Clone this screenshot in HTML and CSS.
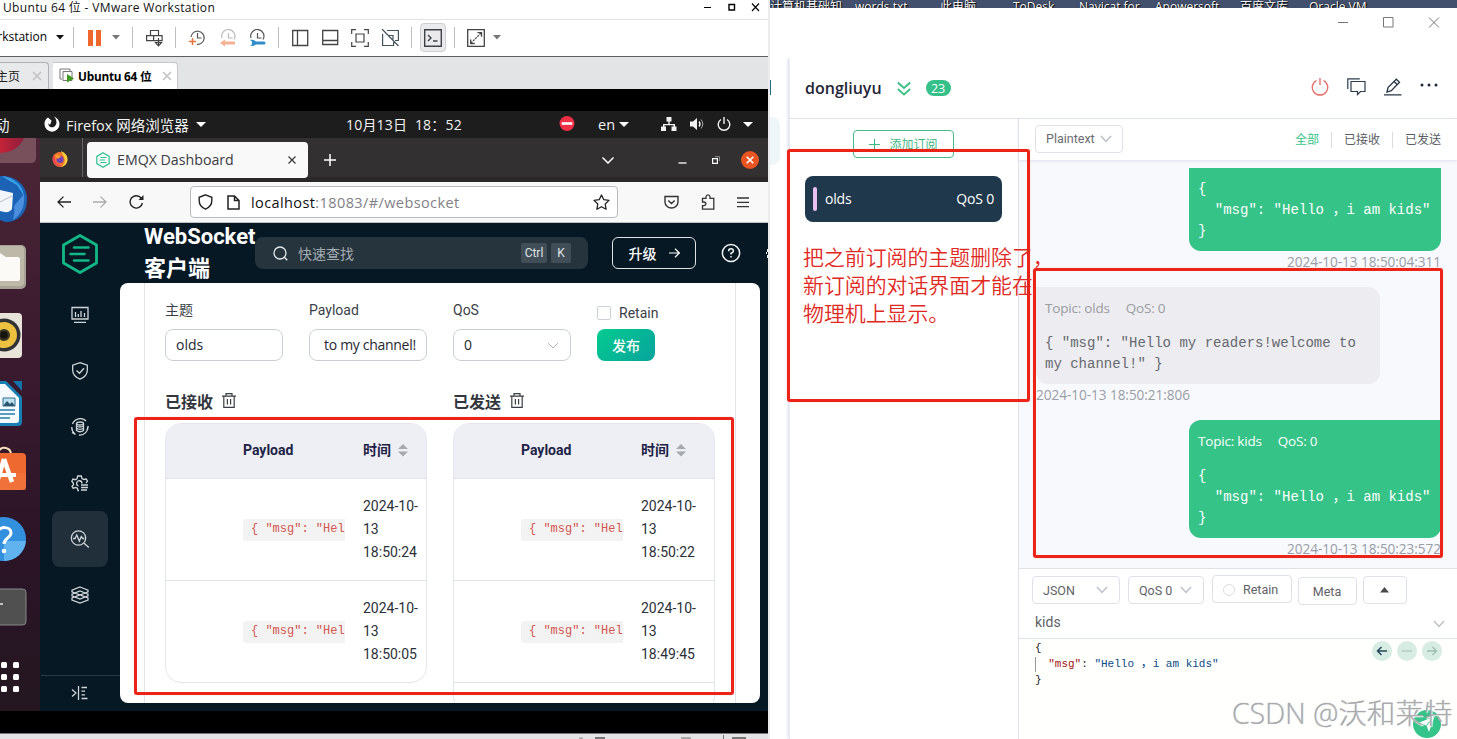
FILE: index.html
```html
<!DOCTYPE html>
<html lang="zh-CN">
<head>
<meta charset="utf-8">
<title>Ubuntu 64 位 - VMware Workstation</title>
<link rel="stylesheet" href="styles.css">
</head>
<body>
<div class="screen">
  <section class="vm">
    <header class="vm-title">
      <span class="vm-name">Ubuntu 64 位 - VMware Workstation</span>
      <svg class="vm-winbtns" width="56" height="13" viewBox="0 0 56 13" fill="none" stroke="#000"><path d="M0 6.500h7"/><path d="M25 3.500h5.500v5.500h-5.500z" stroke-width="1.400"/><path d="M48 2.500l7 7.500M55 2.500l-7 7.500" stroke-width="1.100"/></svg>
    </header>
    <div class="vm-toolbar">
      <span class="menu-text">rkstation</span>
      <svg width="8" height="5"><path d="M0 0h8l-4 4.500z" fill="#111"/></svg>
      <i class="sep"></i>
      <svg width="14" height="16" fill="#f0672c"><path d="M0 0h5v16h-5zM8 0h5v16h-5z"/></svg>
      <svg width="8" height="5"><path d="M0 0h8l-4 4.500z" fill="#777"/></svg>
      <i class="sep"></i>
      <svg width="18" height="18" fill="none" stroke="#444" stroke-width="1.200"><path d="M4.500 1.500h8v5h-8zM.6 6.600h7v5h-7zM7.600 6.600h8.500v5h-8.500M12.500 9v7M9.500 13.500l3 3.300 3-3.300z"/></svg>
      <i class="sep"></i>
      <svg width="17" height="18" fill="none" stroke="#555" stroke-width="1.200"><path d="M2 8a6.600 6.600 0 1 1 6 7.400M8.500 4v5h4"/><path d="M0 12.500h7M3.500 9v7" stroke="#e8743b" stroke-width="1.500"/></svg>
      <svg width="17" height="18" fill="none" stroke="#bbb" stroke-width="1.200"><path d="M2 9a6.600 6.600 0 1 1 12 1.500M8.500 4v5h4"/><path d="M5 10.500v2h10v3H5v2L0 14z" fill="#f4b193" stroke="none"/></svg>
      <svg width="17" height="18" fill="none" stroke="#555" stroke-width="1.200"><path d="M2 9a6.600 6.600 0 1 1 12 1.500M8.500 4v5h4"/><path d="M1 11c4-1 5 1 6 1.500h8a1.500 1.500 0 0 1 0 3H7c-1 .8-3 2-6 1l2-1v-3z" fill="#2f8ec9" stroke="none"/></svg>
      <i class="sep"></i>
      <svg width="17" height="18" fill="none" stroke="#444" stroke-width="1.300"><path d="M.7 1.500h15v15h-15zM5.500 1.500v15"/></svg>
      <svg width="17" height="18" fill="none" stroke="#444" stroke-width="1.300"><path d="M.7 1.500h15v14h-15zM.7 11.500h15"/></svg>
      <svg width="19" height="18" fill="none" stroke="#444" stroke-width="1.200"><path d="M.7 5V.7H5M13 .7h4.300V5M17.300 13v4.300H13M5 17.300H.7V13M5 5h8v8H5z"/></svg>
      <svg width="19" height="18" fill="none" stroke="#44535c" stroke-width="1.200"><path d="M6 1.500h11.400v10H14M1.600 5v11.500h11V13M8 6.500h4v4M1 0l16.500 17"/></svg>
      <i class="sep"></i>
      <span class="tool-active"><svg width="18" height="18" fill="none" stroke="#3c4248" stroke-width="1.400"><path d="M.7.7h16.600v16.600H.7zM4 6l3 3-3 3M9 12h4.500"/></svg></span>
      <i class="sep"></i>
      <svg width="18" height="18" fill="none" stroke="#444" stroke-width="1.300"><path d="M.7.7h16.600v16.600H.7z"/><path d="M4 14l10-10" stroke-dasharray="2 1"/><path d="M10.500 3.700h4v4M3.700 10.500v4h4"/></svg>
      <svg width="8" height="5"><path d="M0 0h8l-4 4.500z" fill="#777"/></svg>
    </div>
    <div class="vm-tabs">
      <div class="vm-tab home"><span>主页</span><svg width="10" height="10"><path d="M1 1l8 8M9 1l-8 8" stroke="#c2c2c4" stroke-width="1.600"/></svg></div>
      <div class="vm-tab current"><svg width="16" height="16" fill="none" stroke="#777"><path d="M3 11H1V1h10v2"/><path d="M4 3.500h9v9H4z" fill="#fff"/><path d="M8 6l7 4.500-7 4z" fill="#3f9a1f" stroke="none"/></svg><b>Ubuntu 64 位</b><svg width="10" height="10"><path d="M1 1l8 8M9 1l-8 8" stroke="#c2c2c4" stroke-width="1.600"/></svg></div>
    </div>
    <div class="blackband"></div>
    <div class="gnome">
      <span class="act">动</span>
      <svg width="16" height="16"><path d="M4 1.500C1.500 3 .3 5.500.5 8.300A7.500 7.500 0 0 0 15.500 8C15.500 4.500 13 1.500 9.500.5c1.700 1 2.500 2.500 2.700 4.200.9 2-.3 6.600-4.200 6.600-2.600 0-4-2.200-3.600-4L6 9l1.600-4.300z" fill="#fff"/></svg>
      <span>Firefox 网络浏览器</span>
      <svg width="10" height="5"><path d="M0 0h10l-5 5z" fill="#fff"/></svg>
      <span class="clock">10月13日&nbsp; 18：52</span>
      <svg width="16" height="16"><circle cx="8" cy="7.500" r="7.500" fill="#ee2f45"/><path d="M2.700 6.200h10.600v2.600H2.700z" fill="#fff"/></svg>
      <span>en</span>
      <svg width="10" height="5"><path d="M0 0h10l-5 5z" fill="#fff"/></svg>
      <svg width="16" height="14" fill="#f2f2f2"><path d="M5.500 0h5v4.500H8.700V7H14v2.500h1.500V14h-5V9.500h2V8.300h-9v1.200H5V14H0V9.500h2V7h5.300V4.500H5.500z"/></svg>
      <svg width="16" height="14" fill="none" stroke="#f2f2f2"><path d="M0 4.500h3L7 1v12L3 9.500H0z" fill="#f2f2f2" stroke="none"/><path d="M9 4.500q2 2.500 0 5" stroke-width="1.400"/><path d="M11 2.500q3.600 4.500 0 9" stroke="#aaa"/></svg>
      <svg width="14" height="14" fill="none" stroke="#f2f2f2" stroke-width="1.400"><path d="M4 2.500a5.800 5.800 0 1 0 6 0M7 0v7"/></svg>
      <svg width="10" height="5"><path d="M0 0h10l-5 5z" fill="#fff"/></svg>
    </div>
    <div class="guest">
      <nav class="dock">
        <svg width="40" height="27"><defs><linearGradient id="ff" x1="0" x2="1"><stop offset="0" stop-color="#c62438"/><stop offset="1" stop-color="#8c1d3d"/></linearGradient></defs><path d="M0 0h36v20q0 5-5 5H0z" fill="#77505b"/><path d="M0 0h24Q18 14 0 15z" fill="url(#ff)"/></svg>
        <svg width="40" height="68"><path d="M0 11C14 10 27 19 27 34S18 57 5 57L0 55z" fill="#1c62b5"/><path d="M2 11c12 1 21 10 22 20l-7-11-9-5z" fill="#39a1ea"/><path d="M24 29q2 17-11 26 2-9 1-14z" fill="#4b8ede"/><path d="M0 25l13 3-1 16q-3 5-12 2z" fill="#f3f5f9"/><path d="M0 37l12-6" stroke="#b7bfce" fill="none"/></svg>
        <svg width="40" height="68"><rect x="-20" y="12" width="46" height="44" rx="5" fill="#a7a196"/><rect x="-20" y="13" width="44" height="40" rx="4" fill="#beb8a9"/><path d="M0 20l6 4h12q2 0 2 2v20q0 2-2 2H0z" fill="#fbfaf7"/></svg>
        <svg width="40" height="68"><rect x="-20" y="12" width="42" height="45" rx="4" fill="#e9e4da"/><circle cx="4" cy="34" r="16.500" fill="#303235"/><circle cx="4" cy="34" r="13" fill="#edc13f"/><circle cx="4" cy="34" r="6" fill="#3c3728"/><circle cx="4" cy="34" r="3.800" fill="#17140e"/></svg>
        <svg width="40" height="68"><path d="M0 12h6l16 16v25q0 4-4 4H0z" fill="#1680b5"/><path d="M0 15h5l14 14v22q0 3-3 3H0z" fill="#f4fafd"/><path d="M13 12h9v10z" fill="#1273aa"/><path d="M3 29h12v8H3z" fill="#bfe2f3" stroke="#33718f"/><path d="M3 37l4-5 3 3 2-2 3 4z" fill="#2b556d"/><path d="M0 41h15M0 45h15M0 49h10" stroke="#227ea8" stroke-width="1.600"/></svg>
        <svg width="40" height="68"><path d="M-3 20q2-11 9-9 5 1 5 7" fill="none" stroke="#f6e1ba" stroke-width="2"/><rect x="-20" y="16" width="46" height="37" rx="4" fill="#ee6930"/><path d="M0 36h26v17H0z" fill="#f27c47" opacity=".45"/><path d="M-1 38h17" fill="none" stroke="#fff" stroke-width="4"/><path d="M4 22l8 23M4 22l-6 20" stroke="#fff" stroke-width="4.500"/></svg>
        <svg width="40" height="68"><circle cx="4" cy="34" r="22" fill="#3390df"/><path d="M4 36h22A22 22 0 0 1 4 56z" fill="#60b3ef"/><path d="M-2 27c1-6 13-6 13 1 0 5-7 5-7 11" fill="none" stroke="#fff" stroke-width="3"/><circle cx="4" cy="46" r="2.300" fill="#fff"/></svg>
        <svg width="40" height="68"><rect x="-20" y="16" width="46" height="36" rx="3.500" fill="#505050" stroke="#888"/><path d="M0 31h3" stroke="#fff" stroke-width="1.300"/></svg>
        <svg width="40" height="68" fill="#fff"><g id="dots"><rect x="1" y="21" width="6" height="6" rx="1.500"/><rect x="13" y="21" width="6" height="6" rx="1.500"/></g><use href="#dots" y="12"/><use href="#dots" y="24"/></svg>
      </nav>
      <div class="browser">
        <div class="tabstrip">
          <span class="pin"><svg width="18" height="18"><circle cx="9" cy="9.500" r="7.500" fill="#f1732c"/><path d="M10 1q7 3 6.500 9.500Q15 17 9 17q7-3 4-10z" fill="#fcd13a"/><path d="M3 4q-3 6 1 10 4 3.600 8 2-7-1-8-6z" fill="#ee3f59"/><circle cx="9" cy="9.500" r="3.500" fill="#7142b5"/><path d="M4 5q4-1 6 2l-4 2z" fill="#f79a2a"/></svg></span>
          <div class="btab"><svg width="14" height="16" fill="none" stroke="#2fc090" stroke-width="1.200"><path d="M7 .8l6.200 3.600v7.200L7 15.200.8 11.600V4.400zM4.500 5.500h6M3.500 8h5.500M4.500 10.500h6"/></svg><span>EMQX Dashboard</span><svg width="8" height="8"><path d="M.5.5l7 7M7.500.5l-7 7" stroke="#333" stroke-width="1.100"/></svg></div>
          <svg class="plus" width="12" height="12"><path d="M6 0v12M0 6h12" stroke="#fff" stroke-width="1.500"/></svg>
          <div class="bwin">
            <svg width="12" height="7" fill="none" stroke="#fff" stroke-width="1.500"><path d="M.5.5L6 6l5.500-5.500"/></svg>
            <svg width="9" height="9"><path d="M.5 7h8" stroke="#fff" stroke-width="1.300"/></svg>
            <svg width="8" height="8" fill="none" stroke="#fff" stroke-width="1.200"><path d="M.6 2.600h4.800v4.800H.6z"/><path d="M3 .6h4.400V5" stroke="#aaa" stroke-width=".8"/></svg>
            <svg width="18" height="18"><circle cx="9" cy="9" r="9" fill="#e95420"/><path d="M5.700 5.700l6.600 6.600M12.300 5.700l-6.600 6.600" stroke="#fff" stroke-width="1.600"/></svg>
          </div>
        </div>
        <div class="navbar">
          <svg width="14" height="12" fill="none" stroke="#222" stroke-width="1.300"><path d="M14 6H1M6.500.6L1 6l5.500 5.400"/></svg>
          <svg width="14" height="12" fill="none" stroke="#aaa" stroke-width="1.300"><path d="M0 6h13M7.500.6L13 6l-5.500 5.400"/></svg>
          <svg width="15" height="14" fill="none" stroke="#222" stroke-width="1.400"><path d="M12.500 3.500A6.200 6.200 0 1 0 13.400 8"/><path d="M14.500 0v5h-5z" fill="#222" stroke="none"/></svg>
          <div class="urlbar">
            <svg width="15" height="16" fill="none" stroke="#222" stroke-width="1.400"><path d="M7.500.8l6.300 2.500v3.500c0 4-3 7-6.300 8.400C4.200 13.800 1.200 10.800 1.200 6.800V3.300z"/></svg>
            <svg width="13" height="15" fill="none" stroke="#222" stroke-width="1.500"><path d="M1 1h6.500L12 5.500V14H1zM7.500 1v4.500H12"/></svg>
            <span class="url"><b>localhost</b>:18083/#/websocket</span>
            <svg width="17" height="16" fill="none" stroke="#222" stroke-width="1.300" stroke-linejoin="round"><path d="M8.500 1l2.300 4.700 5.200.7-3.800 3.600.9 5.200-4.600-2.500-4.600 2.500.9-5.200L1 6.400l5.200-.7z"/></svg>
          </div>
          <svg width="15" height="14" fill="none" stroke="#333" stroke-width="1.400"><path d="M1 1.500h13v5.500a6.500 6 0 0 1-13 0zM4.300 5.500l3.200 3 3.200-3"/></svg>
          <svg width="14" height="16" fill="none" stroke="#333" stroke-width="1.300"><path d="M1.500 15.200h11.300V4.300H9V2.800q-.2-2-2-2t-2 2v1.500H1.500V8H3q2 .3 2 1.800t-2 1.800H1.500z"/></svg>
          <svg width="12" height="11"><path d="M0 1h12M0 5.300h12M0 9.600h12" stroke="#333" stroke-width="1.300"/></svg>
        </div>
        <div class="emqx">
          <aside class="side">
            <svg class="logo" width="38" height="42" fill="none" stroke="#12b886" stroke-width="2.800" stroke-linejoin="round" stroke-linecap="round"><path d="M19 2.500l16.500 9.500v18L19 39.500 2.500 30V12z"/><path d="M13 14.500h14.500M9.500 21h14M13 27.500h14.500" stroke-width="2.500"/></svg>
            <div class="side-nav">
              <span><svg width="18" height="18"><path d="M1 1.500h16v11.500H1zM3 16.300h12M4.500 6v5M7.300 8v3M10 5v6M13.500 7v4"/></svg></span>
              <span><svg width="18" height="18"><path d="M9 .7l7.300 2.500v5q0 6-7.300 9Q1.700 14 1.700 8.200v-5zM5.500 8.500l3 2.800 4.500-5"/></svg></span>
              <span><svg width="18" height="18"><path d="M1.500 6A8.200 8.200 0 0 1 15 3M17 8a8.200 8.200 0 0 1-9 9M4 16A8.200 8.200 0 0 1 .8 9M16 12l1.200-4M4.500 16.500L1 14.500"/><ellipse cx="9" cy="5.500" rx="3.500" ry="1.500"/><path d="M5.500 5.500v7q3.500 2.500 7 0v-7M5.500 8q3.500 2 7 0M5.500 10.300q3.500 2 7 0"/></svg></span>
              <span><svg width="18" height="18"><path d="M8 16.500H7l-.6-2.200-2-.9-2.200 1-1.200-2 1.500-1.700L2.300 9 .8 7.300l1.100-2.200 2.300.6 1.800-1L6.700 2h3.600L11 4.500l1.800 1 2.400-.5 1.300 2L15 9M11 9.500A2.700 2.700 0 1 0 7.500 12M10 11h7M10 13.500h7M10 16h6"/></svg></span>
              <span class="on"><svg width="20" height="18"><circle cx="8.500" cy="8" r="7.200"/><path d="M13.800 13l5 4.500M3 8.500h2L6.800 5l2.500 6 2-4.500 1.500 2h1.500"/></svg></span>
              <span><svg width="18" height="18"><path d="M9 1l8 3.200v1.600L9 9 1 5.800V4.200zM1 8.200V9.800L9 13l8-3.200V8.200L9 5zM1 12v2l8 3 8-3v-2L9 9z"/></svg></span>
            </div>
            <div class="fold"><svg width="18" height="16"><path d="M1 4.500L5 8l-4 3.500M7.500 1v14M10.500 2.500H16M10.500 6.200H14M10.500 9.900H14M10.500 13.500H16.500"/></svg></div>
          </aside>
          <div class="emqx-main">
            <div class="emqx-head">
              <h1>WebSocket<br>客户端</h1>
              <div class="search"><svg width="15" height="15" fill="none" stroke="#e4e8ea" stroke-width="1.300"><circle cx="7" cy="7" r="6"/><path d="M11.300 11.300l3 3"/></svg><span>快速查找</span><kbd>Ctrl</kbd><kbd class="k">K</kbd></div>
              <div class="upgrade"><b>升级</b><svg width="11" height="10" fill="none" stroke="#fff" stroke-width="1.200"><path d="M0 5h10M6 .8L10.300 5 6 9.200"/></svg></div>
              <svg class="help" width="20" height="20" fill="none" stroke="#f2f4f5" stroke-width="1.500"><circle cx="10" cy="10" r="8.600"/><path d="M7.600 8.200q0-2.500 2.400-2.500t2.400 2.200Q12.400 9.200 10 10.300v1.200M10 13v1.500"/></svg>
              <svg class="cut" width="2" height="9" fill="#e9edef"><path d="M1 0h1v3H1zM0 3h1v2H0zM1 6h1v3H1z"/></svg>
            </div>
            <main class="card">
              <div class="sheet">
                <div class="form">
                  <label><span>主题</span><span class="input">olds</span></label>
                  <label><span>Payload</span><span class="input pay">to my channel!</span></label>
                  <label><span>QoS</span><span class="input">0<svg width="12" height="7" fill="none" stroke="#aeb2b8"><path d="M1 1l5 5 5-5"/></svg></span></label>
                  <div class="pub"><span class="retain"><i></i>Retain</span><span class="btn">发布</span></div>
                </div>
                <div class="lists">
                  <section>
                    <h2>已接收<svg width="14" height="15" fill="none" stroke="#3a3f46" stroke-width="1.200"><path d="M0 3.200h14M4 3V.7h6V3M1.800 3.500v10.800h10.400V3.500M5.400 6v5.500M8.600 6v5.500"/></svg></h2>
                    <div class="table">
                      <div class="tr th"><span>Payload</span><span>时间<svg width="10" height="13" fill="#a5a8ae"><path d="M0 5h10L5 0zM0 7.500h10l-5 5z"/></svg></span></div>
                      <div class="tr"><code>{ "msg": "Hell</code><time>2024-10-13 18:50:24</time></div>
                      <div class="tr"><code>{ "msg": "Hell</code><time>2024-10-13 18:50:05</time></div>
                    </div>
                  </section>
                  <section>
                    <h2>已发送<svg width="14" height="15" fill="none" stroke="#3a3f46" stroke-width="1.200"><path d="M0 3.200h14M4 3V.7h6V3M1.800 3.500v10.800h10.400V3.500M5.400 6v5.500M8.600 6v5.500"/></svg></h2>
                    <div class="table open">
                      <div class="tr th"><span>Payload</span><span>时间<svg width="10" height="13" fill="#a5a8ae"><path d="M0 5h10L5 0zM0 7.500h10l-5 5z"/></svg></span></div>
                      <div class="tr"><code>{ "msg": "Hell</code><time>2024-10-13 18:50:22</time></div>
                      <div class="tr"><code>{ "msg": "Hell</code><time>2024-10-13 18:49:45</time></div>
                      <div class="tr"></div>
                    </div>
                  </section>
                </div>
              </div>
            </main>
          </div>
        </div>
      </div>
    </div>
    <div class="blackband"></div>
    <div class="vm-status"><svg width="200" height="4"><g fill="#777"><circle cx="20" cy="4" r="2" fill="#aaa"/><path d="M34 2h10v2H34z"/><path d="M120 2h10v2h-10z" fill="#aaa"/><path d="M162 0h1v4h-1zM171 2h14v2h-14z"/></g></svg></div>
  </section>

  <section class="host">
    <div class="host-desk"><span>计算机基础知</span><span>words.txt</span><span>此电脑</span><span>ToDesk</span><span>Navicat for</span><span>Apowersoft</span><span>百度文库</span><span>Oracle VM</span></div>
    <div class="mqttx">
      <div class="caption"><svg width="102" height="11" fill="none" stroke="#777"><path d="M0 5.500h10M45.500.5h9.500v9.500h-9.500zM91 .5l10 10M101 .5l-10 10"/></svg></div>
      <div class="mx-row">
        <div class="gutter"><i class="mark"></i><i class="chip"></i></div>
        <div class="mx">
          <header class="mx-head">
            <b>dongliuyu</b>
            <svg width="14" height="15" fill="none" stroke="#3bbf84" stroke-width="1.800"><path d="M.8 1.500L7 7l6.200-5.500M.8 8L7 13.500 13.200 8"/></svg>
            <span class="badge">23</span>
            <div class="mx-tools">
              <svg width="18" height="18" fill="none" stroke="#e5716a" stroke-width="1.400"><path d="M5.500 2.500a7.700 7.700 0 1 0 7 0M9 0v7"/></svg>
              <svg width="19" height="18" fill="none" stroke="#2c3c4c" stroke-width="1.200"><path d="M.8 11V.8h12M4 3.500h14v10h-4.500l-3 3v-3H4z"/></svg>
              <svg width="18" height="18" fill="none" stroke="#263545" stroke-width="1.300"><path d="M0 16.800h17.500M3 14l1-4.500L12.300 1.200l3.200 3L7.300 12.700zM10 3.500l3.200 3"/></svg>
              <svg width="18" height="8" fill="#1d2b3a"><circle cx="2" cy="2" r="1.500"/><circle cx="9" cy="2" r="1.500"/><circle cx="16" cy="2" r="1.500"/></svg>
            </div>
          </header>
          <div class="mx-body">
            <aside class="subs">
              <div class="newsub"><svg width="11" height="11"><path d="M5.500 0v11M0 5.500h11" stroke="#42b883" stroke-width="1.100"/></svg><span>添加订阅</span></div>
              <div class="topic"><i></i><span>olds</span><span>QoS 0</span></div>
            </aside>
            <div class="chat">
              <div class="filter">
                <span class="sel">Plaintext<svg width="12" height="8" fill="none" stroke="#bcc0c8" stroke-width="1.500"><path d="M1 1l5 5.500L11 1"/></svg></span>
                <div class="views"><span class="on">全部</span><span>已接收</span><span>已发送</span></div>
              </div>
              <div class="msgs">
                <div class="bubble out first"><pre>{
  "msg": "Hello ，i am kids"
}</pre></div>
                <time class="r">2024-10-13 18:50:04:311</time>
                <div class="bubble in"><p><span>Topic: olds</span><span>QoS: 0</span></p><pre>{ "msg": "Hello my readers!welcome to
my channel!" }</pre></div>
                <time>2024-10-13 18:50:21:806</time>
                <div class="bubble out last"><p><span>Topic: kids</span><span>QoS: 0</span></p><pre>{
  "msg": "Hello ，i am kids"
}</pre></div>
                <time class="r">2024-10-13 18:50:23:572</time>
              </div>
              <div class="composer">
                <div class="opts">
                  <span class="o json">JSON<svg width="12" height="8" fill="none" stroke="#bcc0c8" stroke-width="1.500"><path d="M1 1l5 5.500L11 1"/></svg></span>
                  <span class="o qos">QoS 0<svg width="12" height="8" fill="none" stroke="#bcc0c8" stroke-width="1.500"><path d="M1 1l5 5.500L11 1"/></svg></span>
                  <span class="o ret"><i></i>Retain</span>
                  <span class="o meta">Meta</span>
                  <span class="o up"><svg width="10" height="6"><path d="M0 5.500h9L4.500 0z" fill="#4a4a4a"/></svg></span>
                </div>
                <div class="topic-in"><span>kids</span><svg width="12" height="8" fill="none" stroke="#bcc0c8" stroke-width="1.500"><path d="M1 1l5 5.500L11 1"/></svg></div>
                <div class="editor">
                  <pre>{
<i></i>  <span class="key">"msg"</span>: <span class="str">"Hello <span class="wide">，</span>i am kids"</span>
}</pre>
                  <div class="hist">
                    <svg width="20" height="20" fill="none" stroke="#24485a" stroke-width="1.500"><circle cx="10" cy="10" r="10" fill="#d7ece2" stroke="none"/><path d="M15 10H6M9.500 6L5.500 10l4 4"/></svg>
                    <svg width="20" height="20" fill="none" stroke="#a9c8ba" stroke-width="1.200"><circle cx="10" cy="10" r="10" fill="#d7ece2" stroke="none"/><path d="M5 10h10"/></svg>
                    <svg width="20" height="20" fill="none" stroke="#9dbfb0" stroke-width="1.300"><circle cx="10" cy="10" r="10" fill="#d7ece2" stroke="none"/><path d="M5 10h9M10.500 6l4 4-4 4"/></svg>
                  </div>
                </div>
              </div>
            </div>
          </div>
        </div>
      </div>
    </div>
  </section>

  <svg class="send" width="28" height="28"><circle cx="14" cy="14" r="14" fill="#34c388"/><path d="M21.500 6.500L16 22l-2.500-6.500L5 13z" fill="#fff"/><path d="M13.500 15.500l3-4" stroke="#34c388"/></svg>
  <div class="watermark">CSDN @沃和莱特</div>
  <i class="mk mk-a"></i><i class="mk mk-b"></i><i class="mk mk-c"></i>
  <p class="note">把之前订阅的主题删除了，<br>新订阅的对话界面才能在<br>物理机上显示。</p>
</div>
</body>
</html>
```
FILE: styles.css
```css
* { box-sizing: border-box; margin: 0; padding: 0; }
body { width: 1457px; height: 739px; overflow: hidden; background: #fff; font-family: "Open Sans", "Noto Sans CJK SC", sans-serif; }
svg { display: block; flex: none; }
i { font-style: normal; }
span, b, time { white-space: nowrap; }
.screen { position: relative; display: flex; width: 1457px; height: 739px; overflow: hidden; }

/* virtual machine window */
.vm { width: 768px; flex: none; display: flex; flex-direction: column; overflow: hidden; }
.vm-title { height: 20px; display: flex; justify-content: space-between; padding: 0 8px 5px 3px; align-items: center; font-size: 12px; color: #111; border-bottom: 1px solid #e2e2e2; }
.vm-name { letter-spacing: .34px; }
.vm-toolbar { height: 37px; border-bottom: 1px solid #5f5f62; display: grid; align-items: center; padding-bottom: 1px; grid-template-columns: 56px 17px 15px 24px 20px 14px 29px 14px 31px 29px 29px 14px 30px 29px 30px 30px 9px 34px 13px 26px auto; }
.menu-text { font-size: 12px; width: 47px; display: flex; justify-content: flex-end; padding-bottom: 2px; }
.sep { width: 1px; height: 21px; background: #bfbfc1; }
.tool-active { width: 26px; height: 29px; display: grid; place-items: center; background: #eaeaec; border: 1px solid #cfcfd2; border-radius: 4px; }
.vm-tabs { height: 32px; background: #e3e4e6; display: flex; align-items: flex-end; gap: 4px; }
.vm-tab { height: 27px; display: flex; align-items: center; border: 1px solid #aeb0b3; border-width: 1px 1px 0 0; font-size: 12px; color: #222; border-radius: 0 4px 0 0; }
.home { width: 49px; background: #e8e9eb; justify-content: space-between; padding-right: 6px; }
.home span { margin-left: -4px; }
.current { width: 125px; background: #fff; border-color: #c6c6c8; padding: 0 5px 0 6px; color: #000; }
.current b { margin: -2px auto 0 3px; font-size: 11.800px; letter-spacing: -.25px; }
.blackband { height: 22px; flex: none; background: #000; }
.gnome { height: 27px; background: #1d1d1d; color: #f2f2f2; font-size: 14.500px; display: grid; align-items: center; padding-bottom: 1px; grid-template-columns: 44px 22px 130px 150px 213px 39px 21px 42px 29px 27px 26px auto; overflow: hidden; }
.act { margin-left: -5px; }
.clock { font-size: 14px; letter-spacing: .2px; }
.guest { height: 573px; flex: none; display: flex; }
.dock { width: 40px; background: linear-gradient(#4b2636, #3c1b2f 35%, #2a1426 75%, #241720); overflow: hidden; }
.browser { width: 728px; display: flex; flex-direction: column; }
.tabstrip { height: 44px; background: #333031; display: flex; align-items: center; border-bottom: 5px solid #2a2728; }
.pin { width: 43px; height: 39px; padding: 12px 0 0 11px; border-right: 1px solid #666364; }
.btab { width: 221px; height: 36px; margin: 4px 0 0 4px; background: #f9f9fa; border-radius: 4px; display: flex; align-items: center; padding: 0 12px 0 9px; font-size: 14.200px; color: #3b3b40; }
.btab span { margin: 0 auto 0 7px; }
.plus { margin: 5px 0 0 16px; }
.bwin { margin-left: auto; display: grid; grid-template-columns: 76px 34px 29px 27px; align-items: center; margin-top: 5px; }
.navbar { height: 41px; background: #f8f8f9; border-bottom: 1px solid #c3c3c7; display: grid; align-items: center; grid-template-columns: 36px 36px 61px 474px 37px 36px auto; padding-left: 17px; }
.urlbar { width: 428px; height: 32px; border: 1px solid #b9b9be; border-radius: 4px; background: #fff; display: flex; align-items: center; padding: 0 7px; }
.url { margin: 0 auto 0 11px; color: #818186; font-size: 14.500px; letter-spacing: .4px; }
.url b { font-weight: 400; color: #111; }
.urlbar svg + svg { margin-left: 14px; }

/* dashboard page */
.emqx { height: 488px; background: #071825; display: flex; font-family: Roboto, "Noto Sans CJK SC", sans-serif; font-size: 14px; }
.side { width: 80px; display: flex; flex-direction: column; align-items: center; }
.logo { margin: 10px 0 12px; }
.side-nav { display: flex; flex-direction: column; }
.side-nav span { width: 56px; height: 56px; display: grid; place-items: center; border-radius: 8px; }
.side-nav svg, .fold svg { fill: none; stroke: #cfd5d8; stroke-width: 1.300; }
.side-nav .on { background: #202f3a; }
.fold { margin-top: auto; width: 79px; height: 36px; border-top: 1px solid #2a3a45; display: flex; padding: 9px 0 0 30px; }
.emqx-main { width: 648px; flex: none; }
.emqx-head { height: 60px; display: flex; align-items: center; overflow: hidden; }
.emqx-head h1 { width: 111px; flex: none; margin: -1px 0 0 24px; font-size: 22px; line-height: 32px; color: #fff; font-weight: 700; white-space: nowrap; }
.search { width: 333px; flex: none; height: 32px; background: #26343e; border-radius: 8px; display: flex; align-items: center; padding: 0 17px 0 18px; color: #a4acb1; }
.search span { margin: 0 auto 0 10px; }
.search kbd { height: 20px; width: 26px; background: #414e57; border-radius: 2px; color: #dfe3e5; font: 12px/20px Roboto, sans-serif; text-align: center; }
.search .k { width: 20px; margin-left: 4px; }
.upgrade { width: 84px; flex: none; height: 32px; margin-left: 24px; border: 1px solid #dfe3e5; border-radius: 6px; color: #fff; display: flex; align-items: center; justify-content: center; gap: 12px; font-weight: 500; }
.upgrade b { font-weight: 500; }
.help { margin-left: 25px; margin-top: -1px; }
.cut { margin-left: 25px; }
.card { width: 640px; height: 420px; background: #fff; border-radius: 8px; overflow: hidden; padding: 0 24px; }
.sheet { height: 420px; border: 1px solid #dfe3ea; border-width: 0 1px; padding: 16px 20px 0; }
.form { display: grid; grid-template-columns: repeat(4, 118px); column-gap: 26px; color: #3a3f48; height: 62px; }
.form label { display: grid; grid-template-rows: 30px 32px; line-height: 22px; }
.input { border: 1px solid #c9ced6; border-radius: 8px; display: flex; align-items: center; justify-content: space-between; padding: 0 11px 0 10px; color: #24282f; font-family: "Open Sans", sans-serif; }
.pay { padding: 0 0 0 14px; letter-spacing: -.3px; }
.pub { display: grid; grid-template-rows: 30px 32px; }
.retain { display: flex; align-items: center; gap: 8px; height: 28px; }
.retain i { width: 14px; height: 14px; border: 1px solid #cbd0d8; border-radius: 2px; }
.btn { width: 58px; height: 32px; border-radius: 8px; background: linear-gradient(135deg, #05cb8f, #07a49d); color: #fff; display: grid; place-items: center; font-weight: 500; }
.lists { display: grid; grid-template-columns: 262px 262px; column-gap: 26px; }
.lists h2 { height: 62px; padding-top: 30px; font-size: 16px; line-height: 24px; color: #33373d; display: flex; gap: 9px; font-weight: 700; }
.lists h2 svg { margin-top: 2px; }
.table { height: 260px; border: 1px solid #e4e6ee; border-radius: 16px; overflow: hidden; }
.table.open { height: 290px; }
.tr { height: 102px; display: grid; grid-template-columns: 102px 62px; column-gap: 18px; padding-left: 77px; align-items: center; border-bottom: 1px solid #e1e3ec; color: #2b3038; line-height: 23px; }
.open .tr { padding-left: 67px; }
.table:not(.open) .tr:last-child { border-color: transparent; }
.tr.th { height: 55px; padding-bottom: 2px; background: #eeeff4; font-weight: 700; color: #1d2346; }
.th span { display: flex; align-items: center; gap: 7px; }
.tr code { display: block; height: 22px; background: #f3f3f4; border-radius: 3px 0 0 3px; padding: 0 1px 0 8px; color: #d4554d; font: 12px/21px "Liberation Mono", monospace; white-space: pre; overflow: hidden; margin-top: 1px; }
.tr time { white-space: normal; width: 60px; }
.vm-status { height: 6px; background: #e4e4e6; border-top: 1px solid #77777a; padding: 1px 0 0 561px; }

/* host desktop and client window */
.host { width: 689px; border-left: 2px solid #ececee; display: flex; flex-direction: column; }
.host-desk { height: 8px; padding-top: 1px; background: #42506e; overflow: hidden; display: grid; grid-template-columns: 85px 85px 73px 66px 76px 85px 69px auto; font-size: 12px; color: #fff; line-height: 12px; text-shadow: 0 0 1px #000, 1px 1px 1px #000; }
.mqttx { height: 731px; background: #fff; }
.caption { height: 50px; padding: 9px 17px 0 0; display: flex; justify-content: flex-end; align-items: flex-start; }
.mx-row { display: flex; height: 681px; }
.gutter { width: 19px; display: flex; flex-direction: column; gap: 22px; padding-top: 22px; }
.mark { width: 1px; height: 15px; background: #24688a; }
.chip { width: 10px; height: 48px; background: #eff6fa; border-radius: 0 8px 8px 0; }
.mx { width: 668px; box-shadow: -1px 0 3px #d9dceb; border-left: 1px solid #e8eaf3; clip-path: inset(0 0 0 -6px); }
.mx-head { height: 61px; border-bottom: 1px solid #e0e1ea; display: flex; align-items: center; padding: 0 19px 0 15px; }
.mx-head b { font-size: 16px; font-weight: 600; color: #1f2638; margin-right: 15px; }
.badge { margin-left: 15px; width: 25px; height: 16px; border-radius: 8px; background: #35c08a; color: #fff; font-size: 12.500px; line-height: 17px; text-align: center; }
.mx-tools { margin-left: auto; margin-top: -2px; display: flex; align-items: center; gap: 18px; }
.mx-body { display: flex; height: 620px; }
.subs { width: 229px; border-right: 1px solid #e0e1ea; padding: 11px 16px 0 15px; }
.newsub { width: 101px; height: 28px; margin: 0 0 18px 48px; border: 1px solid #46bb87; border-radius: 4px; color: #42b883; font-size: 12px; display: flex; align-items: center; justify-content: center; gap: 9px; }
.topic { width: 197px; height: 46px; border-radius: 8px; background: #1f384b; color: #fff; font-size: 14px; letter-spacing: -.2px; display: flex; align-items: center; padding: 0 8px 1px; }
.topic i { width: 4px; height: 24px; border-radius: 2px; background: #eac0f0; margin-right: 8px; }
.topic span:last-child { margin-left: auto; letter-spacing: -.2px; }
.chat { width: 438px; display: flex; flex-direction: column; }
.filter { height: 41px; display: flex; align-items: center; justify-content: space-between; padding: 0 16px 2px; box-shadow: 0 1px 3px #dcdfea; position: relative; }
.sel { width: 88px; height: 28px; border: 1px solid #dfe1ea; border-radius: 4px; display: flex; align-items: center; justify-content: space-between; padding: 0 10px; color: #686b70; font-size: 12.500px; font-family: Roboto, sans-serif; }
.views { display: flex; font-size: 12px; color: #5a5d63; line-height: 16px; padding-top: 3px; }
.views span + span { margin-left: 12px; padding-left: 12px; border-left: 1px solid #dcdde3; }
.views .on { color: #34c388; }
.msgs { height: 409px; flex: none; background: #f8f9fd; padding: 8px 16px 0 17px; display: flex; flex-direction: column; border-bottom: 1px solid #dfe0e8; overflow: hidden; }
.bubble { flex: none; border-radius: 12px; padding: 0 9px; font-size: 13.500px; }
.bubble pre { font: 14px/21px "Liberation Mono", "Noto Sans CJK SC", monospace; white-space: pre; }
.bubble p { display: flex; gap: 16px; height: 46px; padding-top: 12px; line-height: 18px; letter-spacing: -.2px; }
.out { width: 252px; margin-left: auto; background: #35c388; color: #fff; }
.out.first { height: 83px; border-radius: 0 0 12px 12px; padding-top: 11px; }
.out.last { height: 118px; border-radius: 12px 0 12px 12px; margin-top: 14px; }
.in { width: 344px; height: 97px; background: #ececf1; color: #66696e; border-radius: 0 12px 12px 12px; margin-top: 14px; box-shadow: -3px -12px 0 -12px #f1c3e6; }
.in p { color: #9a9ca1; }
.msgs time { height: 22px; line-height: 22px; flex: none; color: #999da5; font-size: 13.600px; letter-spacing: -.05px; }
.msgs time.r { text-align: right; }
.composer { height: 170px; background: #fff; display: flex; flex-direction: column; }
.opts { height: 42px; display: grid; grid-template-columns: 96px 84px 86px 65px 44px; padding: 7px 0 0 13px; align-items: start; font: 12.500px Roboto, sans-serif; color: #606266; }
.o { height: 28px; border: 1px solid #dfe1ea; border-radius: 4px; display: flex; align-items: center; justify-content: space-between; padding: 0 11px 0 10px; }
.json { width: 88px; }
.qos { width: 76px; }
.ret { width: 80px; margin-top: -1px; justify-content: flex-start; gap: 8px; }
.ret i { width: 12px; height: 12px; border: 1px solid #dadce2; border-radius: 50%; margin-top: 2px; }
.meta { width: 59px; margin-top: 1px; justify-content: center; }
.up { width: 44px; justify-content: center; }
.topic-in { height: 28px; display: flex; align-items: center; justify-content: space-between; padding: 0 12px 5px 16px; border-bottom: 1px solid #dfe1ea; font: 14px Roboto, sans-serif; color: #606266; }
.topic-in svg { margin-top: 3px; }
.editor { flex: 1; background: #fffffe; display: flex; justify-content: space-between; padding: 2px 15px 0 16px; }
.editor pre { font: 11px/16px "Liberation Mono", "Noto Sans CJK SC", monospace; color: #222; white-space: pre; margin-top: -1px; }
.editor pre i { display: inline-block; height: 15px; width: 1px; margin-right: -1px; background: #999; vertical-align: middle; }
.key { color: #a31515; }
.str { color: #0b4a85; }
.wide { font-size: 12px; line-height: 12px; }
.hist { display: flex; gap: 5px; }

/* overlays drawn above both windows */
.mk { position: absolute; border: 3px solid #ec2418; border-radius: 3px; box-shadow: 0 0 1px #f58a83; }
.mk-a { left: 134px; top: 417px; width: 600px; height: 278px; }
.mk-b { left: 787px; top: 149px; width: 243px; height: 253px; }
.mk-c { left: 1033px; top: 268px; width: 410px; height: 290px; }
.note { position: absolute; left: 803px; top: 242px; font: 350 20.900px/28px "Noto Sans CJK SC", sans-serif; color: #e0291e; white-space: nowrap; }
.send { position: absolute; left: 1413px; top: 710px; }
.watermark { position: absolute; left: 1232px; top: 693px; font: 300 28.500px/40px "Open Sans", "Noto Sans CJK SC", sans-serif; color: rgba(170, 170, 173, .92); text-shadow: 1px 1px 1px #fff, 0 0 1px #888; white-space: nowrap; }
```
